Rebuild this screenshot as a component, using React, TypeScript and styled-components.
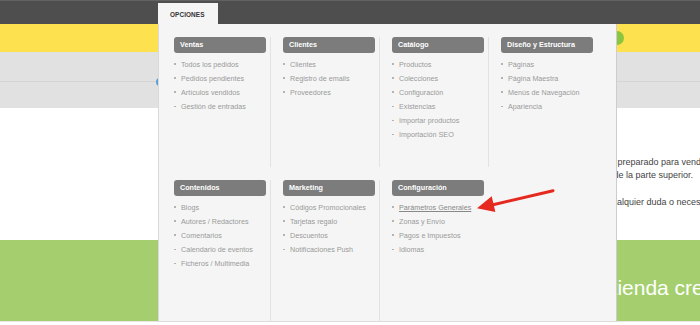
import React from "react";
import styled, { createGlobalStyle } from "styled-components";

const GlobalStyle = createGlobalStyle`
  html, body {
    margin: 0;
    padding: 0;
    width: 700px;
    height: 325px;
    overflow: hidden;
    background: #ffffff;
    font-family: "Liberation Sans", Arial, sans-serif;
  }
`;

const Page = styled.div`
  position: relative;
  width: 700px;
  height: 325px;
  display: flex;
  flex-direction: column;
  overflow: hidden;
`;

const TopBar = styled.div`
  height: 24px;
  box-sizing: border-box;
  background: #4e4e4e;
  border-top: 1px solid #626262;
  display: flex;
  align-items: flex-end;
  padding-left: 158px;
`;

const Tab = styled.div`
  width: 60px;
  height: 21px;
  box-sizing: border-box;
  background: #f5f5f5;
  padding: 4px 0 0 12px;
  font-size: 6.4px;
  line-height: 15px;
  font-weight: bold;
  color: #333333;
  letter-spacing: 0.1px;
`;

const YellowBar = styled.div`
  height: 28px;
  background: #fde14f;
  display: flex;
  align-items: center;
`;

const GreenDot = styled.span`
  width: 14px;
  height: 14px;
  margin-left: 610px;
  border-radius: 50%;
  background: #8cc63f;
`;

const GrayRow = styled.div<{ $h: number; $line?: boolean }>`
  height: ${(p) => p.$h}px;
  background: #e1e1e1;
  border-bottom: ${(p) => (p.$line ? "1px solid #d4d4d4" : "none")};
  display: flex;
  align-items: flex-start;
`;

const BlueDot = styled.span`
  width: 8px;
  height: 8px;
  margin: -4px 0 0 156px;
  border-radius: 50%;
  background: #5b9fd3;
`;

const Content = styled.div`
  height: 133px;
  box-sizing: border-box;
  padding-top: 48px;
  display: flex;
  flex-direction: column;
  gap: 14px;
`;

const Para = styled.div`
  margin-left: 586px;
`;

const Line = styled.div<{ $indent: number }>`
  padding-left: ${(p) => p.$indent}px;
  font-size: 9px;
  line-height: 13px;
  color: #444444;
  white-space: nowrap;
`;

const GreenBand = styled.div`
  height: 81px;
  box-sizing: border-box;
  background: #a5cf6e;
  padding: 36px 0 0 582px;
`;

const BandTitle = styled.div`
  font-size: 21px;
  line-height: 24px;
  color: #ffffff;
  white-space: nowrap;
`;

const Footer = styled.div`
  height: 3px;
  border-top: 1px solid #e6e6e6;
  background: #ffffff;
`;

const Dropdown = styled.div`
  position: absolute;
  left: 158px;
  top: 24px;
  width: 459px;
  height: 298px;
  box-sizing: border-box;
  background: #f5f5f5;
  border-left: 1px solid #d9d9d9;
  border-right: 1px solid #cdcdcd;
  border-bottom: 1px solid #dddddd;
  padding: 13px 0 0 3px;
  display: flex;
  flex-direction: column;
`;

const MenuRow = styled.div<{ $top?: number; $grow?: boolean }>`
  display: grid;
  grid-template-columns: repeat(4, 109px);
  height: ${(p) => (p.$grow ? "auto" : "130px")};
  flex: ${(p) => (p.$grow ? 1 : "none")};
  padding-top: ${(p) => p.$top ?? 0}px;
`;

const Column = styled.div<{ $last?: boolean }>`
  box-sizing: border-box;
  padding: 0 4px 0 12px;
  border-right: 1px solid ${(p) => (p.$last ? "transparent" : "#e2e2e2")};
`;

const Heading = styled.div`
  width: 92px;
  height: 16px;
  box-sizing: border-box;
  border-radius: 3px;
  background: #7c7c7c;
  padding-left: 6px;
  font-size: 7.2px;
  line-height: 16px;
  font-weight: bold;
  color: #ffffff;
  white-space: nowrap;
`;

const List = styled.ul`
  list-style: none;
  margin: 4px 0 0;
  padding: 0;
`;

const Item = styled.li<{ $link?: boolean }>`
  display: flex;
  align-items: center;
  gap: 5px;
  height: 14.1px;
  font-size: 7.2px;
  color: ${(p) => (p.$link ? "#888888" : "#9a9a9a")};
  white-space: nowrap;
  &::before {
    content: "";
    width: 2px;
    height: 1.5px;
    background: #b3b3b3;
    flex: none;
  }
`;

const ItemText = styled.span<{ $link?: boolean }>`
  text-decoration: ${(p) => (p.$link ? "underline" : "none")};
`;

const Arrow = styled.svg`
  position: absolute;
  left: 470px;
  top: 185px;
  width: 90px;
  height: 32px;
  overflow: visible;
`;

type Group = { title: string; items: string[]; link?: string };

const row1: Group[] = [
  { title: "Ventas", items: ["Todos los pedidos", "Pedidos pendientes", "Artículos vendidos", "Gestión de entradas"] },
  { title: "Clientes", items: ["Clientes", "Registro de emails", "Proveedores"] },
  {
    title: "Catálogo",
    items: ["Productos", "Colecciones", "Configuración", "Existencias", "Importar productos", "Importación SEO"],
  },
  { title: "Diseño y Estructura", items: ["Páginas", "Página Maestra", "Menús de Navegación", "Apariencia"] },
];

const row2: Group[] = [
  {
    title: "Contenidos",
    items: ["Blogs", "Autores / Redactores", "Comentarios", "Calendario de eventos", "Ficheros / Multimedia"],
  },
  {
    title: "Marketing",
    items: ["Códigos Promocionales", "Tarjetas regalo", "Descuentos", "Notificaciones Push"],
  },
  {
    title: "Configuración",
    items: ["Parámetros Generales", "Zonas y Envío", "Pagos e Impuestos", "Idiomas"],
    link: "Parámetros Generales",
  },
];

function MenuGroup({ group, last }: { group: Group; last: boolean }) {
  return (
    <Column $last={last}>
      <Heading>{group.title}</Heading>
      <List>
        {group.items.map((it) => (
          <Item key={it} $link={it === group.link}>
            <ItemText $link={it === group.link}>{it}</ItemText>
          </Item>
        ))}
      </List>
    </Column>
  );
}

export default function App() {
  return (
    <>
      <GlobalStyle />
      <Page>
        <TopBar>
          <Tab>OPCIONES</Tab>
        </TopBar>
        <YellowBar>
          <GreenDot />
        </YellowBar>
        <GrayRow $h={30} $line />
        <GrayRow $h={26}>
          <BlueDot />
        </GrayRow>
        <Content>
          <Para>
            <Line $indent={12}>está preparado para vender tus productos.</Line>
            <Line $indent={13}>desde la parte superior.</Line>
          </Para>
          <Para>
            <Line $indent={0}>Para cualquier duda o necesidad, contáctanos.</Line>
          </Para>
        </Content>
        <GreenBand>
          <BandTitle>Tu tienda creada con éxito</BandTitle>
        </GreenBand>
        <Footer />

        <Dropdown>
          <MenuRow>
            {row1.map((g, i) => (
              <MenuGroup key={g.title} group={g} last={i === row1.length - 1} />
            ))}
          </MenuRow>
          <MenuRow $grow $top={13}>
            {row2.map((g, i) => (
              <MenuGroup key={g.title} group={g} last={i === row2.length - 1} />
            ))}
          </MenuRow>
        </Dropdown>

        <Arrow viewBox="0 0 90 32">
          <line x1="83" y1="5.7" x2="22" y2="20" stroke="#e5291f" strokeWidth="3" strokeLinecap="round" />
          <polygon points="7,23.3 25.4,26.9 21.7,11.3" fill="#e5291f" />
        </Arrow>
      </Page>
    </>
  );
}
